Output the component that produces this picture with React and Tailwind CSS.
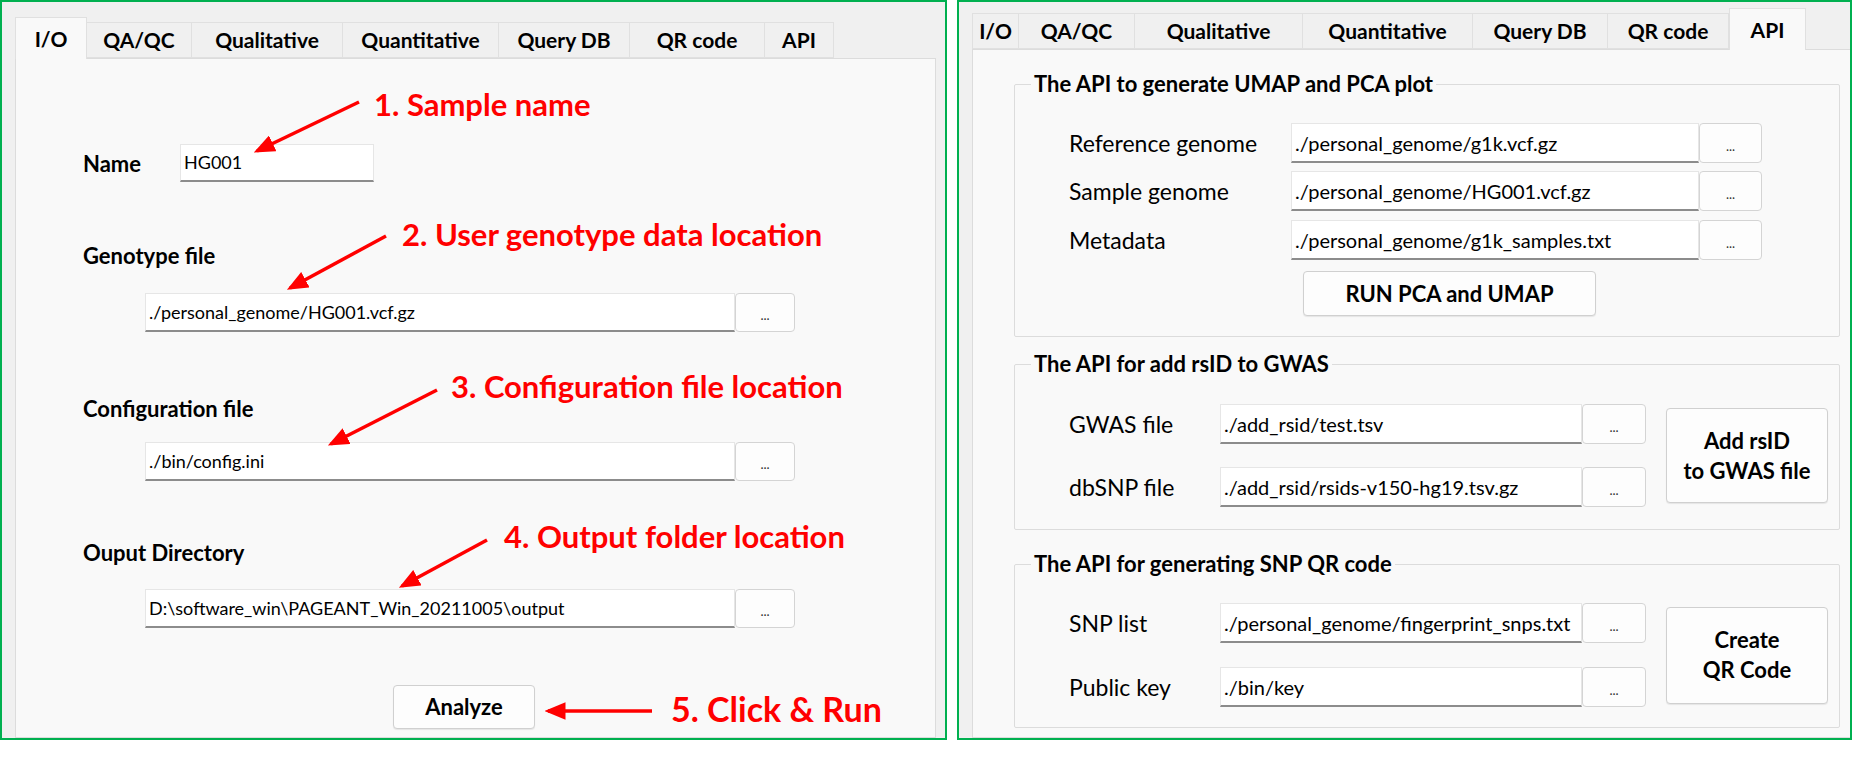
import React from 'react';

const leftTabs = [
  { name: 'I/O', w: 'w-[72px]' },
  { name: 'QA/QC', w: 'w-[105px]' },
  { name: 'Qualitative', w: 'w-[151px]' },
  { name: 'Quantitative', w: 'w-[156px]' },
  { name: 'Query DB', w: 'w-[131px]' },
  { name: 'QR code', w: 'w-[135px]' },
  { name: 'API', w: 'w-[69px]' },
];

const rightTabs = [
  { name: 'I/O', w: 'w-[47px]' },
  { name: 'QA/QC', w: 'w-[116px]' },
  { name: 'Qualitative', w: 'w-[168px]' },
  { name: 'Quantitative', w: 'w-[170px]' },
  { name: 'Query DB', w: 'w-[135px]' },
  { name: 'QR code', w: 'w-[121px]' },
  { name: 'API', w: 'w-[77px]' },
];

const TabBar = ({ tabs, active, size }) => (
  <div className="flex items-end">
    {tabs.map((t) => {
      const on = t.name === active;
      return (
        <div
          key={t.name}
          className={`${t.w} flex items-center justify-center font-bold text-black border border-[#e0e0e0] whitespace-nowrap ${size} ${
            on
              ? 'bg-[#f9f9f9] border-b-0 -mb-px relative z-10 h-[42px]'
              : 'bg-[#f0f0f0] border-l-0 first:border-l h-[36px]'
          }`}
        >
          {t.name}
        </div>
      );
    })}
  </div>
);

const TextBox = ({ value, w, h, text }) => (
  <div
    className={`${w} ${h} ${text} bg-white border border-[#e6e6e6] border-b-2 border-b-[#8c8c8c] flex items-center pl-[3px] text-black whitespace-nowrap overflow-hidden`}
  >
    {value}
  </div>
);

const Dots = ({ w, h }) => (
  <div
    className={`${w} ${h} bg-[#fdfdfd] border border-[#d4d4d4] rounded-[4px] flex items-end justify-center pb-[9px] text-[13px] leading-none text-[#333]`}
  >
    ...
  </div>
);

const Btn = ({ children, w, h, text }) => (
  <div
    className={`${w} ${h} ${text} bg-[#fdfdfd] border border-[#d0d0d0] rounded-[4px] shadow-[0_1px_1px_rgba(0,0,0,0.08)] flex items-center justify-center text-center font-bold text-black leading-[30px]`}
  >
    {children}
  </div>
);

const LeftLabel = ({ children, mt }) => (
  <div className={`${mt} h-[24px] leading-[24px] font-bold text-[22px] text-black`}>{children}</div>
);

const FileRow = ({ value, mt }) => (
  <div className={`${mt} ml-[62px] flex`}>
    <TextBox value={value} w="w-[590px]" h="h-[39px]" text="text-[18px]" />
    <Dots w="w-[60px]" h="h-[39px]" />
  </div>
);

const Arrow = ({ x1, y1, x2, y2 }) => (
  <line x1={x1} y1={y1} x2={x2} y2={y2} stroke="#ff0000" strokeWidth="3.5" markerEnd="url(#head)" />
);

const Note = ({ children, className }) => (
  <div className={`absolute leading-none font-bold text-[#ff0000] whitespace-nowrap ${className}`}>{children}</div>
);

const LeftPanel = () => (
  <div className="relative w-[947px] h-[740px] border-2 border-[#00b050] bg-[#f0f0f0] overflow-hidden flex flex-col pl-[13px] pt-[15px]">
    <TabBar tabs={leftTabs} active="I/O" size="text-[21px]" />
    <div className="w-[921px] flex-1 bg-[#f9f9f9] border border-[#dcdcdc] pl-[67px] flex flex-col">
      <div className="mt-[85px] flex items-center">
        <div className="w-[97px] font-bold text-[22px] text-black">Name</div>
        <TextBox value="HG001" w="w-[194px]" h="h-[38px]" text="text-[18px]" />
      </div>
      <LeftLabel mt="mt-[62px]">Genotype file</LeftLabel>
      <FileRow value="./personal_genome/HG001.vcf.gz" mt="mt-[25px]" />
      <LeftLabel mt="mt-[65px]">Configuration file</LeftLabel>
      <FileRow value="./bin/config.ini" mt="mt-[21px]" />
      <LeftLabel mt="mt-[60px]">Ouput Directory</LeftLabel>
      <FileRow value="D:\software_win\PAGEANT_Win_20211005\output" mt="mt-[24px]" />
      <div className="mt-[57px] ml-[310px]">
        <Btn w="w-[142px]" h="h-[44px]" text="text-[22px]">Analyze</Btn>
      </div>
    </div>

    <svg className="absolute left-0 top-0 pointer-events-none" width="947" height="740">
      <defs>
        <marker id="head" markerWidth="6" markerHeight="5" refX="5" refY="2.5" orient="auto" markerUnits="strokeWidth">
          <polygon points="0,0 6,2.5 0,5" fill="#ff0000" />
        </marker>
      </defs>
      <Arrow x1={357} y1={100} x2={255} y2={149} />
      <Arrow x1={384} y1={234} x2={288} y2={286} />
      <Arrow x1={435} y1={388} x2={329} y2={442} />
      <Arrow x1={485} y1={538} x2={400} y2={584} />
      <Arrow x1={650} y1={709} x2={546} y2={709} />
    </svg>
    <Note className="left-[372px] top-[87px] text-[31px]">1. Sample name</Note>
    <Note className="left-[400px] top-[217px] text-[31px]">2. User genotype data location</Note>
    <Note className="left-[449px] top-[369px] text-[31px]">3. Configuration file location</Note>
    <Note className="left-[502px] top-[519px] text-[31px]">4. Output folder location</Note>
    <Note className="left-[669px] top-[690px] text-[34px]">5. Click &amp; Run</Note>
  </div>
);

const Group = ({ title, mt, pb, children }) => (
  <fieldset className={`${mt} ${pb} w-[826px] border border-[#dcdcdc] rounded-[2px]`}>
    <legend className="ml-[16px] px-[3px] h-[26px] leading-[26px] font-bold text-[22px] text-black">{title}</legend>
    <div className="pl-[54px]">{children}</div>
  </fieldset>
);

const RLabel = ({ w, children }) => <div className={`${w} text-[23px] text-black whitespace-nowrap`}>{children}</div>;

const RRow = ({ label, value, lw, iw, bw, mt }) => (
  <div className={`${mt} flex items-center`}>
    <RLabel w={lw}>{label}</RLabel>
    <TextBox value={value} w={iw} h="h-[40px]" text="text-[20px]" />
    <Dots w={bw} h="h-[40px]" />
  </div>
);

const RightPanel = () => (
  <div className="w-[895px] h-[740px] border-2 border-[#00b050] bg-[#f0f0f0] overflow-hidden flex flex-col pl-[13px] pt-[6px]">
    <TabBar tabs={rightTabs} active="API" size="text-[21px]" />
    <div className="w-[920px] flex-1 bg-[#f9f9f9] border border-[#dcdcdc] pl-[41px] pt-[21px] flex flex-col">
      <Group title="The API to generate UMAP and PCA plot" pb="pb-[20px]">
        <RRow mt="mt-[26px]" label="Reference genome" value="./personal_genome/g1k.vcf.gz" lw="w-[222px]" iw="w-[408px]" bw="w-[63px]" />
        <RRow mt="mt-[8px]" label="Sample genome" value="./personal_genome/HG001.vcf.gz" lw="w-[222px]" iw="w-[408px]" bw="w-[63px]" />
        <RRow mt="mt-[9px]" label="Metadata" value="./personal_genome/g1k_samples.txt" lw="w-[222px]" iw="w-[408px]" bw="w-[63px]" />
        <div className="mt-[11px] ml-[234px]">
          <Btn w="w-[293px]" h="h-[45px]" text="text-[22px]">RUN PCA and UMAP</Btn>
        </div>
      </Group>
      <Group title="The API for add rsID to GWAS" mt="mt-[14px]" pb="pb-[22px]">
        <div className="mt-[27px] flex items-center">
          <div className="flex flex-col gap-[23px]">
            <RRow label="GWAS file" value="./add_rsid/test.tsv" lw="w-[151px]" iw="w-[362px]" bw="w-[64px]" />
            <RRow label="dbSNP file" value="./add_rsid/rsids-v150-hg19.tsv.gz" lw="w-[151px]" iw="w-[362px]" bw="w-[64px]" />
          </div>
          <div className="ml-[20px]">
            <Btn w="w-[162px]" h="h-[95px]" text="text-[22px]">Add rsID<br />to GWAS file</Btn>
          </div>
        </div>
      </Group>
      <Group title="The API for generating SNP QR code" mt="mt-[21px]" pb="pb-[20px]">
        <div className="mt-[26px] flex items-center">
          <div className="flex flex-col gap-[24px]">
            <RRow label="SNP list" value="./personal_genome/fingerprint_snps.txt" lw="w-[151px]" iw="w-[362px]" bw="w-[64px]" />
            <RRow label="Public key" value="./bin/key" lw="w-[151px]" iw="w-[362px]" bw="w-[64px]" />
          </div>
          <div className="ml-[20px]">
            <Btn w="w-[162px]" h="h-[97px]" text="text-[22px]">Create<br />QR Code</Btn>
          </div>
        </div>
      </Group>
    </div>
  </div>
);

export default function App() {
  return (
    <div className="w-[1854px] h-[759px] bg-white flex gap-[10px] [font-family:Lato,'Liberation_Sans',sans-serif]">
      <LeftPanel />
      <RightPanel />
    </div>
  );
}
